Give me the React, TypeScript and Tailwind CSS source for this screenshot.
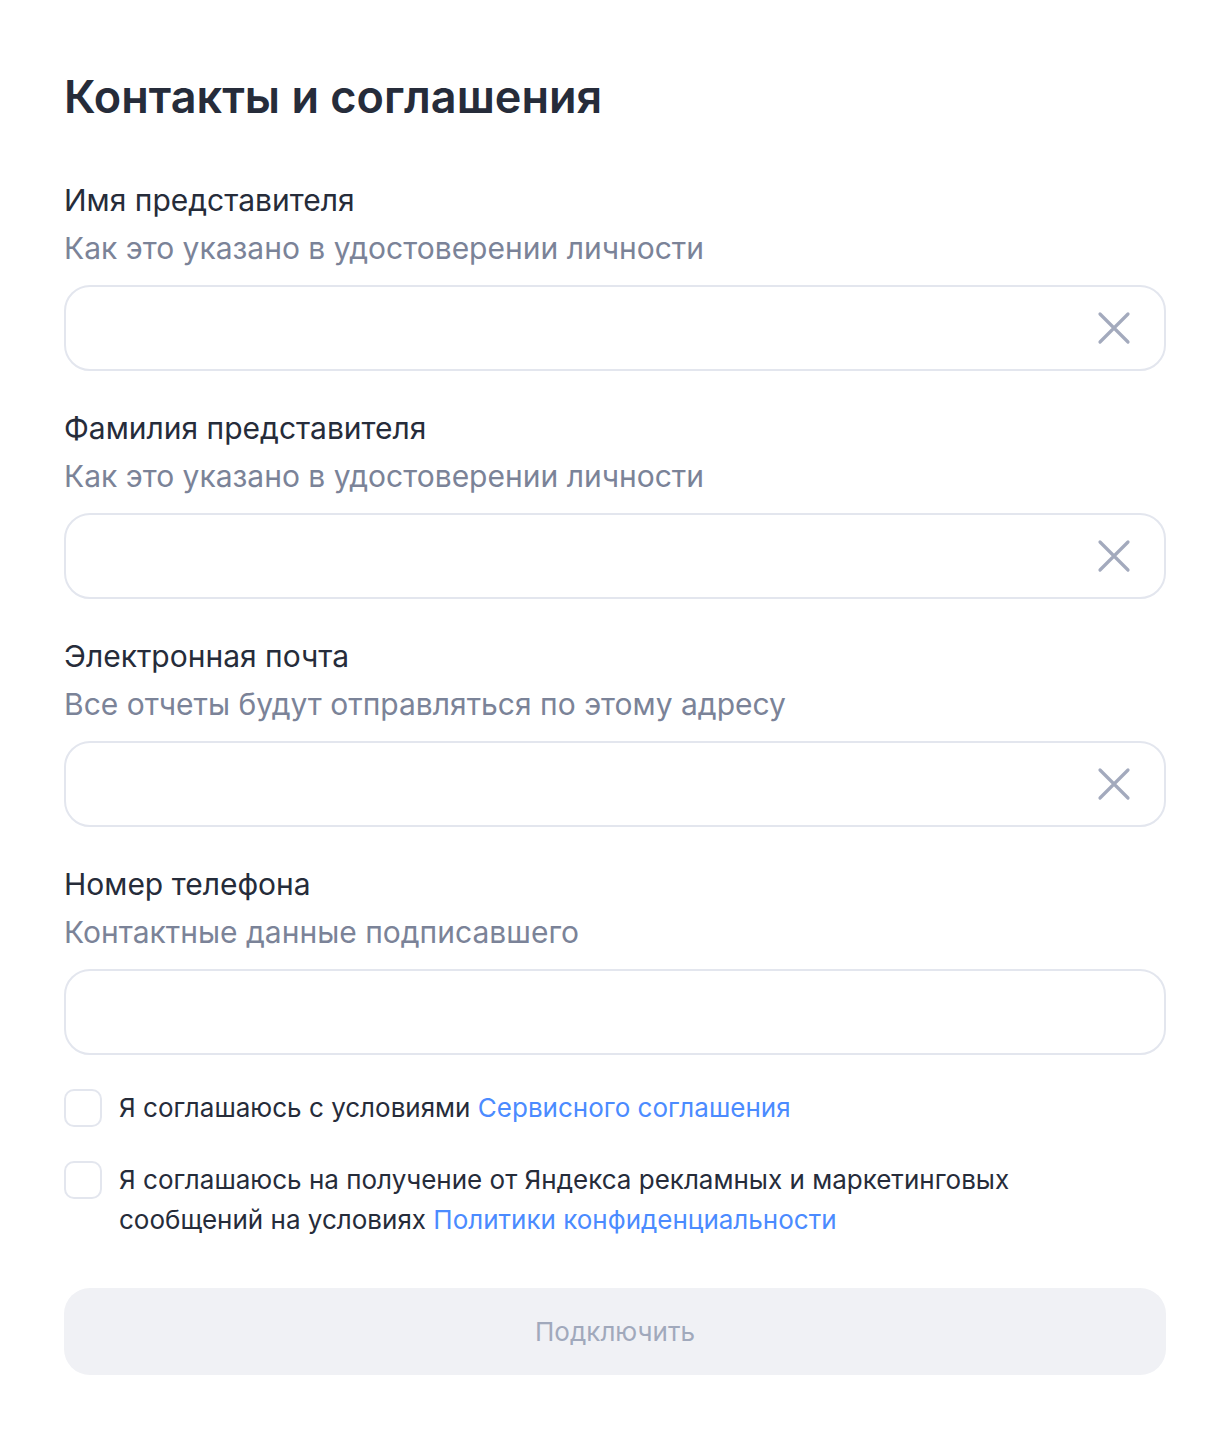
import React, { useState } from 'react';

const font = { fontFamily: 'Inter, "Noto Sans", sans-serif' };

function ClearIcon() {
  return (
    <svg width="34" height="34" viewBox="0 0 34 34" fill="none">
      <path d="M3 3L31 31M31 3L3 31" stroke="#a3aabd" strokeWidth="3.2" strokeLinecap="round" />
    </svg>
  );
}

interface FieldProps {
  label: string;
  hint: string;
  clearable?: boolean;
}

function Field({ label, hint, clearable = true }: FieldProps) {
  const [value, setValue] = useState('');
  return (
    <div className="flex flex-col">
      <div className="text-[30px] leading-[48px] text-[#262c3a]">{label}</div>
      <div className="text-[30px] leading-[48px] text-[#7b8398]">{hint}</div>
      <div className="mt-[13px] h-[86px] rounded-[26px] border-2 border-[#e3e6ee] flex items-center pl-8 pr-[33px]">
        <input
          value={value}
          onChange={e => setValue(e.target.value)}
          className="flex-1 bg-transparent outline-none text-[30px] text-[#262c3a]"
          style={font}
        />
        {clearable && (
          <button onClick={() => setValue('')} className="flex items-center justify-center">
            <ClearIcon />
          </button>
        )}
      </div>
    </div>
  );
}

function Checkbox({ children }: { children: React.ReactNode }) {
  const [checked, setChecked] = useState(false);
  return (
    <label className="flex items-start gap-[17px] cursor-pointer">
      <span
        onClick={() => setChecked(!checked)}
        className={`mt-px w-[38px] h-[38px] shrink-0 rounded-[10px] border-2 ${checked ? 'border-[#4b8bff] bg-[#4b8bff]' : 'border-[#e3e6ee] bg-white'}`}
      />
      <span className="text-[26px] leading-[40px] text-[#262c3a]">{children}</span>
    </label>
  );
}

export default function App() {
  return (
    <div className="min-h-screen bg-white" style={font}>
      <div className="pl-16 pr-[54px] pt-[69px] pb-[61px] flex flex-col">
        <h1 className="text-[45px] leading-[56px] font-semibold text-[#262c3a]">Контакты и соглашения</h1>

        <div className="mt-[51px] flex flex-col gap-[33px]">
          <Field label="Имя представителя" hint="Как это указано в удостоверении личности" />
          <Field label="Фамилия представителя" hint="Как это указано в удостоверении личности" />
          <Field label="Электронная почта" hint="Все отчеты будут отправляться по этому адресу" />
          <Field label="Номер телефона" hint="Контактные данные подписавшего" clearable={false} />
        </div>

        <div className="mt-[33px] flex flex-col gap-8">
          <Checkbox>
            Я соглашаюсь с условиями <a className="text-[#4b8bff]">Сервисного соглашения</a>
          </Checkbox>
          <Checkbox>
            Я соглашаюсь на получение от Яндекса рекламных и маркетинговых
            <br />
            сообщений на условиях <a className="text-[#4b8bff]">Политики конфиденциальности</a>
          </Checkbox>
        </div>

        <button
          disabled
          className="mt-12 h-[87px] rounded-[26px] bg-[#f0f1f5] text-[26px] text-[#a1a9bc]"
        >
          Подключить
        </button>
      </div>
    </div>
  );
}
